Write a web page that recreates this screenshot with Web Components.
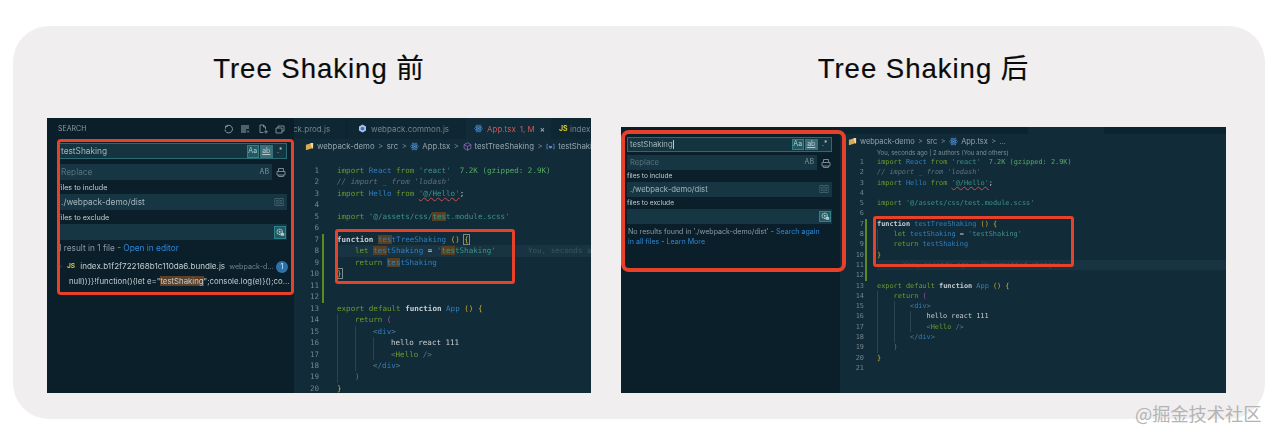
<!DOCTYPE html>
<html>
<head>
<meta charset="utf-8">
<style>
  html, body { margin: 0; background: #fff; }
  body { width: 1276px; height: 437px; overflow: hidden; position: relative; }
</style>
</head>
<body>
<x-card>
  <x-shot heading="Tree Shaking 前" style="--w:544px;--h:275px">
    <x-search style="--side:247px;--fs:8.3px;--field:16px;--label:14px;--gap:5px;--pad-l:11px;--pad-r:7px;--head:25px">
      <x-searchhead>SEARCH</x-searchhead>
      <x-field flags>testShaking</x-field>
      <x-field dim replace style="margin-top:var(--gap)">Replace</x-field>
      <x-label>files to include</x-label>
      <x-field book>./webpack-demo/dist</x-field>
      <x-label>files to exclude</x-label>
      <x-field gear></x-field>
      <x-note style="margin-top:1px">1 result in 1 file - <a-link>Open in editor</a-link></x-note>
      <x-result file="index.b1f2f722168b1c110da6.bundle.js" dir="webpack-d..." count="1">null))}}!function(){let e="<mark>testShaking</mark>";console.log(e)}();co...</x-result>
    </x-search>
    <x-editor style="--tabs:21px;--crumbs:14px">
      <x-tab slot="tabs" style="width:52px;padding-left:0"><span style="margin-left:-1px">ck.prod.js</span></x-tab>
      <x-tab slot="tabs" style="width:118px;margin-left:2px;padding-left:10px"><x-icon name="webpack"></x-icon>webpack.common.js</x-tab>
      <x-tab slot="tabs" active style="width:85px"><x-icon name="react"></x-icon><span style="color:#c9595c">App.tsx</span><span style="color:#c9595c;margin-left:4px">1, M</span><span style="margin-left:5px;color:#c5d0d4">×</span></x-tab>
      <x-tab slot="tabs" style="width:40px"><b style="color:#d6c332;font-size:7px">JS</b>&nbsp;index</x-tab>
      <x-crumbs slot="crumbs" style="padding-left:11px">
        <x-icon name="folder"></x-icon>webpack-demo<i>&gt;</i>src<i>&gt;</i><x-icon name="react"></x-icon>App.tsx<i>&gt;</i><x-icon name="cube"></x-icon>testTreeShaking<i>&gt;</i><x-icon name="var"></x-icon>testShaking
      </x-crumbs>
      <x-code matches current="8" blame="You, seconds ago" count="20"
        style="--fs:7.55px;--lh:11.47px;--num:25px;--top:12px;--bar:3px;--code:13px;--indent:18px;--blame:32px"></x-code>
    </x-editor>
    <x-mark style="left:10px;top:21px;width:237px;height:156px;border-radius:4px"></x-mark>
    <x-mark style="left:288px;top:111px;width:180px;height:55px;border-radius:3px"></x-mark>
  </x-shot>

  <x-shot heading="Tree Shaking 后" style="--w:605px;--h:266px">
    <x-search style="--side:219px;--fs:7.7px;--field:14.5px;--label:12.5px;--gap:3.5px;--pad-l:6px;--pad-r:8px;--head:10px">
      <x-searchhead></x-searchhead>
      <x-field flags caret>testShaking</x-field>
      <x-field dim replace style="margin-top:var(--gap)">Replace</x-field>
      <x-label>files to include</x-label>
      <x-field book>./webpack-demo/dist</x-field>
      <x-label>files to exclude</x-label>
      <x-field gear></x-field>
      <x-note style="margin-top:3px;padding-left:1px;height:auto;line-height:10px;white-space:normal;width:198px;font-size:7.1px">No results found in './webpack-demo/dist' - <a-link>Search again in all files</a-link> - <a-link>Learn More</a-link></x-note>
    </x-search>
    <x-editor style="--tabs:7px;--crumbs:14px">
      <x-tab slot="tabs" style="width:188px;background:#0c2330"></x-tab>
      <x-tab slot="tabs" active style="width:76px"></x-tab>
      <x-crumbs slot="crumbs" style="padding-left:8px;font-size:7.4px">
        <x-icon name="folder"></x-icon>webpack-demo<i>&gt;</i>src<i>&gt;</i><x-icon name="react"></x-icon>App.tsx<i>&gt;</i>...
      </x-crumbs>
      <x-code lens="You, seconds ago | 2 authors (You and others)" current="11" blame="You, seconds ago · Uncommitted changes" count="21"
        style="--fs:6.88px;--lh:10.3px;--num:24px;--top:0px;--bar:1px;--code:10px;--indent:16.5px;--blame:26px"></x-code>
    </x-editor>
    <x-mark style="left:0;top:3px;width:225px;height:142px;border-width:4px;border-radius:8px"></x-mark>
    <x-mark style="left:252px;top:89px;width:201px;height:51px;border-radius:3px"></x-mark>
  </x-shot>
</x-card>
<x-watermark>@掘金技术社区</x-watermark>

<script>
const SANS = '"Inter", "Liberation Sans", sans-serif';

const ICONS = {
  refresh: '<path d="M5 2.2h-2.4v2.4M2.8 2.6a3.8 3.8 0 1 1-.9 3" fill="none" stroke="currentColor" stroke-width=".9"/>',
  clear: '<path d="M1 2h8M1 4h8M1 6h5M1 8h5" stroke="currentColor" stroke-width="1"/><path d="M7 6.5l2 2M9 6.5l-2 2" stroke="currentColor" stroke-width=".7"/>',
  newfile: '<path d="M5.5 8.5H2V1h3.5L7.5 3v2.5M5.5 1v2h2M8 6v3.6M6.2 7.8h3.6" fill="none" stroke="currentColor" stroke-width=".8"/>',
  collapse: '<path d="M1 4h6v5H1zM3 4V2h6v5H7" fill="none" stroke="currentColor" stroke-width=".8"/>',
  replace: '<path d="M2.5 4V1.5h5V4M1 4.5h8V8H1zM2.5 8v1.5h5V8" fill="none" stroke="currentColor" stroke-width="1"/>',
  book: '<path d="M.8 1.5h3.6l.6.5.6-.5h3.6v7H5.6L5 9l-.6-.5H.8zM5 2v6.8M2 3.5h2M2 5h2M2 6.5h2M6 3.5h2M6 5h2M6 6.5h2" fill="none" stroke="currentColor" stroke-width=".7"/>',
  gear: '<circle cx="4.7" cy="4.8" r="2.6" fill="none" stroke="currentColor" stroke-width="1.2" stroke-dasharray="1.3 .5"/><circle cx="4.7" cy="4.8" r="1" fill="currentColor"/><rect x="5.6" y="6" width="3.6" height="2.8" rx=".5" fill="currentColor"/>',
  react: '<g fill="none" stroke="#4f8fd0" stroke-width=".7"><ellipse cx="5" cy="5" rx="4.4" ry="1.7"/><ellipse cx="5" cy="5" rx="4.4" ry="1.7" transform="rotate(60 5 5)"/><ellipse cx="5" cy="5" rx="4.4" ry="1.7" transform="rotate(120 5 5)"/></g><circle cx="5" cy="5" r=".9" fill="#4f8fd0"/>',
  folder: '<path d="M1 3l7-2v6l-6 2H1z" fill="#d9a94e"/><path d="M6 1.2h3v5.6L8 7.4z" fill="#f0d9a8"/>',
  cube: '<path d="M5 .8l3.8 2.1v4.2L5 9.2 1.2 7.1V2.9zM1.2 2.9L5 5l3.8-2.1M5 5v4.2" fill="none" stroke="#a66fd0" stroke-width=".8"/>',
  var: '<path d="M2.3 2.5H1v5h1.3M7.7 2.5H9v5H7.7" fill="none" stroke="#5a94d6" stroke-width=".8"/><path d="M3.2 4l1.8 1 1.8-1v2.2L5 7.2 3.2 6.2z" fill="#5a94d6"/>',
  webpack: '<path d="M5 .6l3.9 2.2v4.4L5 9.4 1.1 7.2V2.8z" fill="#a9c3ec"/><path d="M5 3l2 1.1v2L5 7.2 3 6.1v-2z" fill="#3f6fc0"/>',
  chevron: '<path d="M1.5 3.5L5 7l3.5-3.5" fill="none" stroke="currentColor" stroke-width=".9"/>'
};

// k keyword, b blue, s string, c comment, w white, y yellow, p purple, d tag bracket, h size hint, e squiggle, m/M match
const LINES = [
  'k:import ¦b:React ¦k:from ¦s:\'react\'¦h:  7.2K (gzipped: 2.9K)',
  'c:// import _ from \'lodash\'',
  'k:import ¦b:Hello ¦k:from ¦e:\'@/Hello\'¦w:;',
  '',
  'k:import ¦s:\'@/assets/css/¦M:tes¦s:t.module.scss\'',
  '',
  'w!:function ¦m:tes¦b:tTreeShaking ¦y:() ¦Y:{',
  '1¦k:let ¦m:tes¦b:tShaking ¦w:= ¦s:\'¦M:tes¦s:tShaking\'',
  '1¦k:return ¦m:tes¦b:tShaking',
  'Y:}',
  '',
  '',
  'k:export default ¦w!:function ¦b:App ¦y:() {',
  '1¦k:return ¦p:(',
  '2¦d:<¦b:div¦d:>',
  '3¦w:hello react 111',
  '3¦d:<¦k:Hello ¦d:/>',
  '2¦d:</¦b:div¦d:>',
  '1¦p:)',
  'y:}',
  ''
];

const esc = s => s.replace(/&/g, '&amp;').replace(/</g, '&lt;');

class XCard extends HTMLElement {
  constructor() {
    super();
    this.attachShadow({mode: 'open'}).innerHTML = `
      <style>
        :host {
          display: grid;
          grid-template-columns: 544px 605px;
          column-gap: 30px;
          box-sizing: border-box;
          width: 1252px;
          height: 393px;
          margin: 26px 0 0 13px;
          padding: 0 0 26px 34px;
          background: #f0eeef;
          border-radius: 36px;
        }
      </style>
      <slot></slot>`;
  }
}

class XShot extends HTMLElement {
  connectedCallback() {
    this.attachShadow({mode: 'open'}).innerHTML = `
      <style>
        :host { display: flex; flex-direction: column; justify-content: space-between; }
        h2 {
          margin: 27px 0 0;
          height: 32px;
          font: 400 27.5px/32px "Liberation Sans", "Noto Sans CJK SC", sans-serif;
          letter-spacing: 1px;
          color: #0b0b0b;
          text-align: center;
          -webkit-text-stroke: .2px #0b0b0b;
        }
        .win {
          position: relative;
          display: flex;
          width: var(--w);
          height: var(--h);
          filter: blur(.3px);
        }
      </style>
      <h2>${this.getAttribute('heading')}</h2>
      <div class="win"><slot></slot></div>`;
  }
}

class XSearch extends HTMLElement {
  constructor() {
    super();
    this.attachShadow({mode: 'open'}).innerHTML = `
      <style>
        :host {
          display: flex;
          flex-direction: column;
          box-sizing: border-box;
          flex: none;
          width: var(--side);
          padding: 0 var(--pad-r) 0 var(--pad-l);
          background: #0a1f2a;
          color: #9fb0b8;
          font: 400 var(--fs)/1.2 ${SANS};
        }
      </style>
      <slot></slot>`;
  }
}

class XSearchhead extends HTMLElement {
  connectedCallback() {
    const tools = this.textContent.trim()
      ? ['refresh', 'clear', 'newfile', 'collapse'].map(n => `<x-icon name="${n}"></x-icon>`).join('')
      : '';
    this.attachShadow({mode: 'open'}).innerHTML = `
      <style>
        :host {
          display: flex;
          align-items: center;
          justify-content: space-between;
          height: var(--head);
          font-size: 7px;
          color: #8b9ba3;
        }
        .tools { display: flex; gap: 7.5px; color: #93a5ad; margin-right: 2px; margin-bottom: 3px; }
        x-icon { width: 10px; height: 10px; margin: 0; }
        span { margin-bottom: 3px; }
      </style>
      <span><slot></slot></span>
      <div class="tools">${tools}</div>`;
  }
}

class XField extends HTMLElement {
  connectedCallback() {
    const has = a => this.hasAttribute(a);
    let tail = '';
    if (has('flags')) {
      tail = `<span class="flag on">Aa</span><span class="flag on2">ab</span><span class="flag">.*</span>`;
    } else if (has('replace')) {
      tail = `<span class="ab">AB</span>`;
    } else if (has('book')) {
      tail = `<x-icon name="book" class="dimicon"></x-icon>`;
    } else if (has('gear')) {
      tail = `<span class="flag on"><x-icon name="gear"></x-icon></span>`;
    }
    this.attachShadow({mode: 'open'}).innerHTML = `
      <style>
        :host {
          display: flex;
          align-items: center;
          box-sizing: border-box;
          height: var(--field);
          padding: 0 1px 0 3px;
          background: #163644;
          color: #a5b5bb;
          flex: none;
        }
        :host([flags]) { background: #14343f; outline: 1px solid #2d6a72; outline-offset: -1px; }
        :host([dim]) { color: #58717c; margin-right: 15px; position: relative; }
        .text { flex: 1; white-space: nowrap; padding-top: 1px; }
        .caret { display: none; width: 1px; height: 9px; background: #b9c6ca; margin-right: auto; }
        :host([caret]) .text { flex: none; }
        :host([caret]) .caret { display: block; }
        .flag {
          display: flex; align-items: center; justify-content: center;
          width: 12.5px; height: calc(var(--field) - 3px);
          font-size: 7px; color: #b8c6ca; margin-left: 1px;
        }
        .on { background: #205a62; outline: .7px solid #2f8088; outline-offset: -1px; }
        .on2 { background: #3b6e78; text-decoration: underline; }
        .ab { color: #7d929b; font-size: 7px; margin-right: 2px; }
        .dimicon { color: #4f6b78; margin-right: 2px; }
        .outer { position: absolute; right: -14px; top: 3px; color: #76878f; }
        x-icon { width: 10px; height: 10px; margin: 0; }
      </style>
      <span class="text"><slot></slot></span><span class="caret"></span>${tail}
      ${has('replace') ? '<x-icon name="replace" class="outer"></x-icon>' : ''}`;
  }
}

class XLabel extends HTMLElement {
  constructor() {
    super();
    this.attachShadow({mode: 'open'}).innerHTML = `
      <style>
        :host {
          display: flex; align-items: center;
          box-sizing: border-box;
          height: var(--label);
          padding-top: 2px;
          color: #c4ced2;
          font-size: calc(var(--fs) - 1.1px);
        }
      </style>
      <slot></slot>`;
  }
}

class XNote extends HTMLElement {
  constructor() {
    super();
    this.attachShadow({mode: 'open'}).innerHTML = `
      <style>:host { display: block; height: 14px; line-height: 14px; white-space: nowrap; color: #8b9ca4; }</style>
      <slot></slot>`;
  }
}

class XResult extends HTMLElement {
  connectedCallback() {
    const file = this.getAttribute('file'), dir = this.getAttribute('dir'), n = this.getAttribute('count');
    this.attachShadow({mode: 'open'}).innerHTML = `
      <style>
        :host { display: block; margin-top: 5px; color: #c3ccd0; white-space: nowrap; }
        .row { display: flex; align-items: center; height: 14px; font-size: 8.1px; position: relative; }
        .js { color: #d6c332; font-weight: 700; font-size: 6.6px; margin: 0 5px 0 9px; }
        .dir { color: #6f838d; font-size: 7.2px; margin-left: 4px; flex: 1; }
        .badge {
          width: 12px; height: 12px; border-radius: 50%;
          background: #2c71a8; color: #e8f0f4; font-size: 7px;
          display: flex; align-items: center; justify-content: center;
          margin-right: -1px;
        }
        .hit { padding-left: 11px; height: 14px; line-height: 15px; font-size: 7.8px; }
        x-icon { position: absolute; left: -2px; top: 3px; width: 7px; height: 7px; color: #5f7884; margin: 0; }
        ::slotted(mark) { background: #5d4028; color: #c3ccd0; }
      </style>
      <div class="row"><x-icon name="chevron"></x-icon><span class="js">JS</span>${file}<span class="dir">${dir}</span><span class="badge">${n}</span></div>
      <div class="hit"><slot></slot></div>`;
  }
}

class XEditor extends HTMLElement {
  constructor() {
    super();
    this.attachShadow({mode: 'open'}).innerHTML = `
      <style>
        :host {
          display: flex; flex-direction: column; flex: 1; min-width: 0;
          background: #122b38;
          overflow: hidden;
        }
        .tabs { display: flex; height: var(--tabs); background: #0c2330; flex: none; overflow: hidden; }
        .crumbs { height: var(--crumbs); flex: none; }
      </style>
      <div class="tabs"><slot name="tabs"></slot></div>
      <div class="crumbs"><slot name="crumbs"></slot></div>
      <slot></slot>`;
  }
}

class XTab extends HTMLElement {
  constructor() {
    super();
    this.attachShadow({mode: 'open'}).innerHTML = `
      <style>
        :host {
          display: flex; align-items: center; box-sizing: border-box; flex: none;
          padding-left: 8px;
          white-space: nowrap;
          font: 400 8px ${SANS};
          color: #71868f;
          background: #0f2733;
        }
        :host([active]) { background: #122b38; }
      </style>
      <slot></slot>`;
  }
}

class XCrumbs extends HTMLElement {
  constructor() {
    super();
    this.attachShadow({mode: 'open'}).innerHTML = `
      <style>
        :host {
          display: flex; align-items: center; height: 100%;
          white-space: nowrap;
          font: 400 7.8px ${SANS};
          color: #93a5ad;
        }
        ::slotted(i) { font-style: normal; margin: 0 3.5px; color: #71868f; }
        ::slotted(x-icon) { margin-right: 3px; }
      </style>
      <slot></slot>`;
  }
}

class XIcon extends HTMLElement {
  connectedCallback() {
    this.attachShadow({mode: 'open'}).innerHTML = `
      <style>
        :host { display: inline-block; width: 9px; height: 9px; margin-right: 4px; flex: none; }
        svg { display: block; width: 100%; height: 100%; }
      </style>
      <svg viewBox="0 0 10 10">${ICONS[this.getAttribute('name')]}</svg>`;
  }
}

class XCode extends HTMLElement {
  connectedCallback() {
    const matches = this.hasAttribute('matches');
    const current = +this.getAttribute('current');
    const count = +this.getAttribute('count');
    const blame = this.getAttribute('blame');
    const lens = this.getAttribute('lens');
    const rows = LINES.slice(0, count).map((src, i) => {
      const no = i + 1;
      let indent = 0, html = '';
      src.split('¦').forEach(part => {
        if (!part) return;
        if (/^\d$/.test(part)) { indent = +part; return; }
        let [cls, ...rest] = part.split(':');
        const txt = esc(rest.join(':'));
        const bold = cls.endsWith('!');
        cls = cls.replace('!', '');
        // the tes matches are only painted on the search side
        if (cls === 'm' || cls === 'M') {
          const base = cls === 'm' ? 'b' : 's';
          html += `<span class="${base}${matches ? ' hl' : ''}">${txt}</span>`;
        } else if (cls === 'Y') {
          html += `<span class="y${matches ? ' box' : ''}">${txt}</span>`;
        } else {
          html += `<span class="${cls}${bold ? ' bold' : ''}">${txt}</span>`;
        }
      });
      const guides = '<span class="guide"></span>'.repeat(indent);
      const dirty = no >= 7 && no <= 12 ? ' dirty' : '';
      const cur = no === current ? ' cur' : '';
      const note = no === current ? `<span class="blame">${blame}</span>` : '';
      return `<div class="line${cur}"><span class="num">${no}</span><span class="bar${dirty}"></span><span class="src">${guides}${html}${note}</span></div>`;
    }).join('');
    this.attachShadow({mode: 'open'}).innerHTML = `
      <style>
        :host {
          display: block;
          padding-top: var(--top);
          font: 400 var(--fs)/var(--lh) "DejaVu Sans Mono", "Liberation Mono", monospace;
          color: #c3ccd0;
        }
        .lens {
          height: 10px;
          font: 400 6px/10px ${SANS};
          color: #7b8f98;
          padding-left: calc(var(--num) + var(--bar) + var(--code) + 2px);
          margin-bottom: -1px;
        }
        .line { display: flex; height: var(--lh); white-space: pre; }
        .num { width: var(--num); text-align: right; color: #71868f; flex: none; }
        .bar { width: 2px; margin-left: var(--bar); flex: none; }
        .dirty { background: #5d8a1e; }
        .src { margin-left: var(--code); flex: 1; }
        .cur .src { background: #183442; }
        .blame { color: #3c5362; margin-left: var(--blame); }
        .guide {
          display: inline-block; width: var(--indent); height: var(--lh);
          vertical-align: top; box-sizing: border-box;
          border-left: 1px solid #2a4452;
        }
        .k { color: #6f9a2c; }
        .b { color: #2f7fbf; }
        .s { color: #3a9488; }
        .c { color: #5c7480; font-style: italic; }
        .w { color: #c7cfd2; }
        .bold { font-weight: 700; }
        .y { color: #cfae2a; }
        .p { color: #ab4eb0; }
        .d { color: #5a7684; }
        .h { color: #58a868; }
        .e { color: #3a9488; text-decoration: underline wavy #c94f4f .6px; text-underline-offset: 1px; }
        .hl { background: #563f22; }
        .box { outline: .7px solid #7a8a90; outline-offset: -.7px; }
      </style>
      ${lens ? `<div class="lens">${lens}</div>` : ''}${rows}`;
  }
}

class XMark extends HTMLElement {
  constructor() {
    super();
    this.attachShadow({mode: 'open'}).innerHTML = `
      <style>
        :host {
          position: absolute;
          box-sizing: border-box;
          border: 3px solid #e8412a;
          pointer-events: none;
        }
      </style>`;
  }
}

class XWatermark extends HTMLElement {
  constructor() {
    super();
    this.attachShadow({mode: 'open'}).innerHTML = `
      <style>
        :host {
          position: absolute;
          left: 1135px;
          top: 401px;
          font: 400 18.2px/24px "Noto Sans CJK SC", sans-serif;
          color: #b4b4b4;
          white-space: nowrap;
        }
      </style>
      <slot></slot>`;
  }
}

class ALink extends HTMLElement {
  constructor() {
    super();
    this.attachShadow({mode: 'open'}).innerHTML = `<style>:host { display: inline; color: #2f86d8; }</style><slot></slot>`;
  }
}

customElements.define('x-icon', XIcon);
customElements.define('x-card', XCard);
customElements.define('x-shot', XShot);
customElements.define('x-search', XSearch);
customElements.define('x-searchhead', XSearchhead);
customElements.define('x-field', XField);
customElements.define('x-label', XLabel);
customElements.define('x-note', XNote);
customElements.define('x-result', XResult);
customElements.define('x-editor', XEditor);
customElements.define('x-tab', XTab);
customElements.define('x-crumbs', XCrumbs);
customElements.define('x-code', XCode);
customElements.define('x-mark', XMark);
customElements.define('x-watermark', XWatermark);
customElements.define('a-link', ALink);
</script>
</body>
</html>
